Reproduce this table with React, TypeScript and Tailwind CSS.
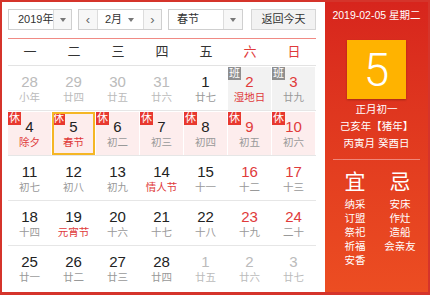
const FONT = { fontFamily: '"Liberation Sans", Arial, "Noto Sans CJK SC", sans-serif' };

type Day = {
  n: number;
  l: string;
  other?: boolean;
  red?: boolean;
  lred?: boolean;
  tag?: "休" | "班";
  sel?: boolean;
};

const weeks: Day[][] = [
  [
    { n: 28, l: "小年", other: true },
    { n: 29, l: "廿四", other: true },
    { n: 30, l: "廿五", other: true },
    { n: 31, l: "廿六", other: true },
    { n: 1, l: "廿七" },
    { n: 2, l: "湿地日", red: true, lred: true, tag: "班" },
    { n: 3, l: "廿九", red: true, tag: "班" },
  ],
  [
    { n: 4, l: "除夕", lred: true, tag: "休" },
    { n: 5, l: "春节", lred: true, tag: "休", sel: true },
    { n: 6, l: "初二", tag: "休" },
    { n: 7, l: "初三", tag: "休" },
    { n: 8, l: "初四", tag: "休" },
    { n: 9, l: "初五", red: true, tag: "休" },
    { n: 10, l: "初六", red: true, tag: "休" },
  ],
  [
    { n: 11, l: "初七" },
    { n: 12, l: "初八" },
    { n: 13, l: "初九" },
    { n: 14, l: "情人节", lred: true },
    { n: 15, l: "十一" },
    { n: 16, l: "十二", red: true },
    { n: 17, l: "十三", red: true },
  ],
  [
    { n: 18, l: "十四" },
    { n: 19, l: "元宵节", lred: true },
    { n: 20, l: "十六" },
    { n: 21, l: "十七" },
    { n: 22, l: "十八" },
    { n: 23, l: "十九", red: true },
    { n: 24, l: "二十", red: true },
  ],
  [
    { n: 25, l: "廿一" },
    { n: 26, l: "廿二" },
    { n: 27, l: "廿三" },
    { n: 28, l: "廿四" },
    { n: 1, l: "廿五", other: true },
    { n: 2, l: "廿六", other: true },
    { n: 3, l: "廿七", other: true },
  ],
];

const weekdays = ["一", "二", "三", "四", "五", "六", "日"];
const yi = ["纳采", "订盟", "祭祀", "祈福", "安香"];
const ji = ["安床", "作灶", "造船", "会亲友"];

function Caret() {
  return <span className="w-0 h-0 border-x-[3px] border-x-transparent border-t-[4px] border-t-[#777]" />;
}

function Cell({ d }: { d: Day }) {
  const bg = d.tag === "休" ? "bg-[#fdeded]" : d.tag === "班" ? "bg-[#f2f2f2]" : "";
  const num = d.other ? "text-[#bbb]" : d.red ? "text-[#e03a3a]" : "text-[#222]";
  const lun = d.other ? "text-[#bbb]" : d.lred ? "text-[#e03a3a]" : "text-[#999]";
  return (
    <div className={`relative h-[43px] mr-px flex flex-col items-center ${bg}`}>
      {d.tag && (
        <span
          className={`absolute left-0 top-0 w-[13px] h-[13px] flex items-center justify-center text-[11px] leading-none text-white ${
            d.tag === "休" ? "bg-[#e8382f]" : "bg-[#8f8f8f]"
          }`}
        >
          {d.tag}
        </span>
      )}
      {d.sel && <span className="absolute inset-0 border-2 border-[#f5b625]" />}
      <span className={`mt-[7px] text-[15px] leading-[16px] ${num}`}>{d.n}</span>
      <span className={`text-[10.5px] leading-[14px] ${lun}`}>{d.l}</span>
    </div>
  );
}

export default function App() {
  return (
    <div
      className="w-[430px] h-[295px] border-2 border-b-[3px] border-[#d5342b] flex bg-white"
      style={FONT}
    >
      <div className="w-[323px] pl-[6px] pt-[7px] flex flex-col">
        <div className="flex items-center h-[21px] text-[11px] text-[#333] whitespace-nowrap">
          <div className="w-[64px] h-full flex border border-[#cfcfcf] bg-white">
            <span className="flex-1 flex items-center pl-[9px]">2019年</span>
            <span className="w-[18px] border-l border-[#ddd] bg-[#f7f7f7] flex items-center justify-center">
              <Caret />
            </span>
          </div>
          <div className="ml-[6px] w-[84px] h-full flex border border-[#cfcfcf] bg-[#f7f7f7]">
            <span className="w-[19px] border-r border-[#ddd] flex items-center justify-center text-[#666] text-[13px]">‹</span>
            <span className="flex-1 flex items-center justify-between pl-[7px] pr-[9px] bg-white">
              2月
              <Caret />
            </span>
            <span className="w-[18px] border-l border-[#ddd] flex items-center justify-center text-[#666] text-[13px]">›</span>
          </div>
          <div className="ml-[6px] w-[75px] h-full flex border border-[#cfcfcf] bg-white">
            <span className="flex-1 flex items-center pl-[8px]">春节</span>
            <span className="w-[19px] border-l border-[#ddd] bg-[#f7f7f7] flex items-center justify-center">
              <Caret />
            </span>
          </div>
          <div className="ml-[8px] w-[65px] h-full border border-[#d6d6d6] bg-[#f2f2f2] flex items-center justify-center">
            返回今天
          </div>
        </div>

        <div className="w-[308px] mt-[8px] border-t border-[#f08a84]">
          <div className="grid grid-cols-7 h-[27px] border-b border-[#e3e3e3] text-[13px]">
            {weekdays.map((w, i) => (
              <div
                key={w}
                className={`flex items-center justify-center ${i > 4 ? "text-[#e03a3a]" : "text-[#333]"}`}
              >
                {w}
              </div>
            ))}
          </div>
          {weeks.map((wk, i) => (
            <div key={i} className="grid grid-cols-7 border-b border-[#e6e6e6] pt-px last:border-b-0">
              {wk.map((d, j) => (
                <Cell key={j} d={d} />
              ))}
            </div>
          ))}
        </div>
      </div>

      <div className="flex-1 bg-gradient-to-b from-[#d7251d] to-[#ec4d22] text-white flex flex-col items-center text-[10.5px]">
        <div className="mt-[6px] leading-[14px] whitespace-nowrap">2019-02-05 星期二</div>
        <div
          className="mt-[18px] w-[59px] h-[59px] bg-[#ffb300] shadow-[0_1px_2px_rgba(0,0,0,0.25)] flex items-center justify-center text-[46px] font-light leading-none"
          style={{ fontFamily: "Roboto, sans-serif" }}
        >
          5
        </div>
        <div className="mt-[2px] leading-[17px] text-center whitespace-nowrap">
          <div>正月初一</div>
          <div>己亥年【猪年】</div>
          <div>丙寅月 癸酉日</div>
        </div>
        <div className="mt-[7px] w-[87px] border-t border-[#f0877a]" />
        <div className="mt-[10px] w-full flex pl-[14px] gap-[11px]">
          <div className="w-[32px] flex flex-col items-center">
            <span className="text-[21px] leading-[24px]">宜</span>
            <div className="mt-[3px] flex flex-col items-center leading-[14px]">
              {yi.map((t) => (
                <span key={t}>{t}</span>
              ))}
            </div>
          </div>
          <div className="w-[36px] flex flex-col items-center">
            <span className="text-[21px] leading-[24px]">忌</span>
            <div className="mt-[3px] flex flex-col items-center leading-[14px] whitespace-nowrap">
              {ji.map((t) => (
                <span key={t}>{t}</span>
              ))}
            </div>
          </div>
        </div>
      </div>
    </div>
  );
}
